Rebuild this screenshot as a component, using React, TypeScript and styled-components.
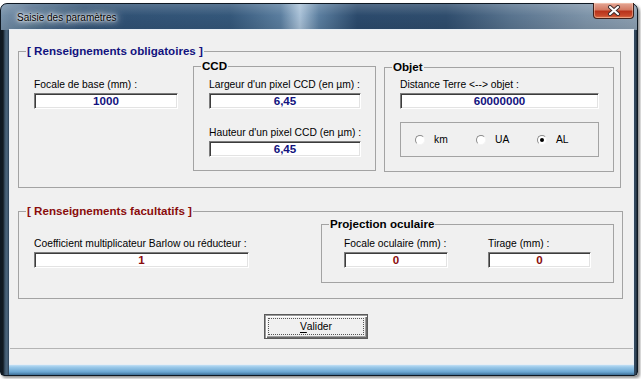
import React from "react";
import styled, { createGlobalStyle } from "styled-components";

const GlobalStyle = createGlobalStyle`
  html, body {
    margin: 0;
    padding: 0;
    background: #ffffff;
  }
  body {
    font-family: "Liberation Sans", Arial, sans-serif;
  }
`;

const BLUE = "#12127e";
const RED = "#8a0c0c";

const App = () => {
  return (
    <Desktop>
      <GlobalStyle />
      <Window>
        <TitleBar>
          <Title>Saisie des paramètres</Title>
          <CloseButton>
            <svg width="14" height="11" viewBox="0 0 14 11">
              <path d="M3 2 L11 9 M11 2 L3 9" stroke="#3a2a2a" strokeWidth="4" strokeLinecap="round" />
              <path d="M3 2 L11 9 M11 2 L3 9" stroke="#ffffff" strokeWidth="2.2" strokeLinecap="round" />
            </svg>
          </CloseButton>
        </TitleBar>
        <Client>
          <Group $width={603}>
            <GroupTitle $color={BLUE}>[ Renseignements obligatoires ]</GroupTitle>
            <GroupRow $pad="2px 6px 15px 15px">
              <Column $width={144} $top={18}>
                <Label>Focale de base (mm) :</Label>
                <Field $color={BLUE}>1000</Field>
              </Column>
              <SubGroup $width={183} $left={15} $top={0}>
                <SubTitle>CCD</SubTitle>
                <SubBody $pad="6px 14px 13px 15px">
                  <Label>Largeur d'un pixel CCD (en µm) :</Label>
                  <Field $color={BLUE}>6,45</Field>
                  <Label $top={17}>Hauteur d'un pixel CCD (en µm) :</Label>
                  <Field $color={BLUE}>6,45</Field>
                </SubBody>
              </SubGroup>
              <SubGroup $width={230} $left={8} $top={1}>
                <SubTitle>Objet</SubTitle>
                <SubBody $pad="5px 14px 14px 15px">
                  <Label>{"Distance Terre <--> objet :"}</Label>
                  <Field $color={BLUE}>60000000</Field>
                  <RadioBox>
                    <RadioItem>
                      <Radio $checked={false} />
                      <span>km</span>
                    </RadioItem>
                    <RadioItem>
                      <Radio $checked={false} />
                      <span>UA</span>
                    </RadioItem>
                    <RadioItem>
                      <Radio $checked />
                      <span>AL</span>
                    </RadioItem>
                  </RadioBox>
                </SubBody>
              </SubGroup>
            </GroupRow>
          </Group>

          <Group $width={605} $top={16}>
            <GroupTitle $color={RED}>[ Renseignements facultatifs ]</GroupTitle>
            <GroupRow $pad="0 6px 15px 15px">
              <Column $width={215} $top={19}>
                <Label>Coefficient multiplicateur Barlow ou réducteur :</Label>
                <Field $color={RED}>1</Field>
              </Column>
              <SubGroup $width={293} $left={72} $top={0}>
                <SubTitle>Projection oculaire</SubTitle>
                <PairRow>
                  <Column $width={104} $top={0}>
                    <Label>Focale oculaire (mm) :</Label>
                    <Field $color={RED}>0</Field>
                  </Column>
                  <Column $width={103} $top={0}>
                    <Label>Tirage (mm) :</Label>
                    <Field $color={RED}>0</Field>
                  </Column>
                </PairRow>
              </SubGroup>
            </GroupRow>
          </Group>

          <ButtonRow>
            <Button>
              <FocusRing>
                <u>V</u>alider
              </FocusRing>
            </Button>
          </ButtonRow>
          <StatusBar />
        </Client>
      </Window>
    </Desktop>
  );
};

export default App;

const Desktop = styled.div`
  width: 641px;
  height: 379px;
  box-sizing: border-box;
  padding: 3px 3px 3px 0;
  overflow: hidden;
`;

const Window = styled.div`
  box-sizing: border-box;
  width: 638px;
  height: 373px;
  display: flex;
  flex-direction: column;
  padding: 0 3px 10px 8px;
  border: 1px solid #0e1822;
  border-radius: 7px 7px 4px 4px;
  box-shadow: 2px 2px 3px rgba(0, 0, 0, 0.45);
  background:
    linear-gradient(180deg, rgba(255, 255, 255, 0.18), rgba(255, 255, 255, 0) 45%, rgba(0, 0, 0, 0.08)) 0 0 / 100% 26px no-repeat,
    linear-gradient(
        90deg,
        #7892aa 0%,
        #51708e 5%,
        #2f5073 13%,
        #34577a 36%,
        #5b7e9f 44%,
        #a9c1d7 47%,
        #5b7e9f 50%,
        #2b4a6c 56%,
        #2f4d6d 70%,
        #58738e 80%,
        #7d93a8 92%,
        #8c9fb1 100%
      )
      0 0 / 100% 26px no-repeat,
    linear-gradient(90deg, #101921 0, #101921 2px, #3d556b 4px, #4d6880 6px, #2a3f54 8px, transparent 8px),
    linear-gradient(270deg, #1a2835 0, #3a5167 2px, #2a3f54 3px, transparent 3px),
    linear-gradient(
      180deg,
      #3c5670 0px,
      #23364a 40px,
      #1f3145 calc(100% - 14px),
      #d6ebfa calc(100% - 11px),
      #9ccaea calc(100% - 8px),
      #6aa6d2 calc(100% - 3px),
      #3d6d94 100%
    );
`;

const TitleBar = styled.div`
  height: 25px;
  display: flex;
  justify-content: space-between;
  align-items: flex-start;
  padding-left: 8px;
`;

const Title = styled.div`
  align-self: center;
  margin-top: 1px;
  font-size: 10px;
  color: #000;
  text-shadow: 0 0 2px #fff, 0 0 5px #fff, 0 0 9px rgba(255, 255, 255, 0.9), 0 0 12px rgba(255, 255, 255, 0.7);
`;

const CloseButton = styled.div`
  width: 41px;
  height: 16px;
  margin-top: -1px;
  box-sizing: border-box;
  display: flex;
  align-items: center;
  justify-content: center;
  border: 1px solid #40201a;
  border-top: none;
  border-radius: 0 0 4px 4px;
  background: linear-gradient(180deg, #e4a796 0%, #d37a63 45%, #b8331b 55%, #c84a2c 85%, #e07a50 100%);
  box-shadow: inset 0 0 0 1px rgba(255, 220, 200, 0.45);
`;

const Client = styled.div`
  width: 625px;
  height: 336px;
  box-sizing: border-box;
  border: 1px solid #e8eef4;
  background: #f0f0f0;
  display: flex;
  flex-direction: column;
  padding: 14px 0 0 8px;
  font-size: 10.3px;
  color: #000;
`;

const Group = styled.fieldset<{ $width: number; $top?: number }>`
  width: ${({ $width }) => $width}px;
  box-sizing: border-box;
  margin: ${({ $top }) => $top || 0}px 0 0 0;
  padding: 0;
  min-inline-size: 0;
  border: 1px solid #a3a3a3;
`;

const GroupTitle = styled.legend<{ $color: string }>`
  margin-left: 7px;
  padding: 0 1px;
  font-size: 11.6px;
  font-weight: bold;
  line-height: 14px;
  color: ${({ $color }) => $color};
`;

const GroupRow = styled.div<{ $pad: string }>`
  display: flex;
  align-items: flex-start;
  padding: ${({ $pad }) => $pad};
`;

const Column = styled.div<{ $width: number; $top: number }>`
  width: ${({ $width }) => $width}px;
  margin-top: ${({ $top }) => $top}px;
  display: flex;
  flex-direction: column;
`;

const SubGroup = styled.fieldset<{ $width: number; $left: number; $top: number }>`
  width: ${({ $width }) => $width}px;
  box-sizing: border-box;
  margin: ${({ $top }) => $top}px 0 0 ${({ $left }) => $left}px;
  padding: 0;
  min-inline-size: 0;
  border: 1px solid #a3a3a3;
`;

const SubTitle = styled.legend`
  margin-left: 7px;
  padding: 0 1px;
  font-size: 11.6px;
  font-weight: bold;
  line-height: 12px;
  color: #000;
`;

const SubBody = styled.div<{ $pad: string }>`
  display: flex;
  flex-direction: column;
  padding: ${({ $pad }) => $pad};
`;

const PairRow = styled.div`
  display: flex;
  gap: 40px;
  padding: 7px 22px 14px 22px;
`;

const Label = styled.div<{ $top?: number }>`
  margin-top: ${({ $top }) => $top || 0}px;
  line-height: 13px;
  white-space: nowrap;
`;

const Field = styled.div<{ $color: string }>`
  margin-top: 2px;
  height: 16px;
  box-sizing: border-box;
  border: 1px solid;
  border-color: #7c7c7c #ffffff #ffffff #7c7c7c;
  box-shadow: inset 1px 1px 0 #3c3c3c, inset -1px -1px 0 #e3e3e3;
  background: #fff;
  text-align: center;
  font-size: 11.6px;
  font-weight: bold;
  line-height: 14px;
  color: ${({ $color }) => $color};
`;

const RadioBox = styled.div`
  margin-top: 13px;
  height: 35px;
  box-sizing: border-box;
  border: 1px solid #a3a3a3;
  display: flex;
  align-items: center;
  padding-left: 14px;
`;

const RadioItem = styled.div`
  width: 65px;
  display: flex;
  align-items: center;
  gap: 9px;
  line-height: 13px;
`;

const Radio = styled.span<{ $checked: boolean }>`
  width: 10px;
  height: 10px;
  box-sizing: border-box;
  border-radius: 50%;
  border: 1px solid;
  border-color: #8a8a8a #f4f4f4 #f4f4f4 #8a8a8a;
  background: #fff;
  display: flex;
  align-items: center;
  justify-content: center;

  &::after {
    content: "";
    width: 4px;
    height: 4px;
    border-radius: 50%;
    background: ${({ $checked }) => ($checked ? "#000" : "transparent")};
  }
`;

const ButtonRow = styled.div`
  margin-top: 15px;
  padding-left: 246px;
  display: flex;
`;

const Button = styled.div`
  width: 104px;
  height: 25px;
  box-sizing: border-box;
  border: 1px solid #5a5a5a;
  background: #f0f0f0;
  box-shadow: inset 1px 1px 0 #9a9a9a, inset 2px 2px 0 #fff, inset -1px -1px 0 #6a6a6a, inset -2px -2px 0 #a0a0a0;
  padding: 3px;
  display: flex;
`;

const FocusRing = styled.div`
  flex: 1;
  border: 1px dotted #555;
  display: flex;
  align-items: center;
  justify-content: center;
  font-size: 10.3px;
  color: #000;

  u {
    text-decoration-thickness: 1px;
    text-underline-offset: 2px;
  }
`;

const StatusBar = styled.div`
  margin: 9px 0 0 -8px;
  flex: 1;
  border-top: 1px solid #b4b4b4;
`;
